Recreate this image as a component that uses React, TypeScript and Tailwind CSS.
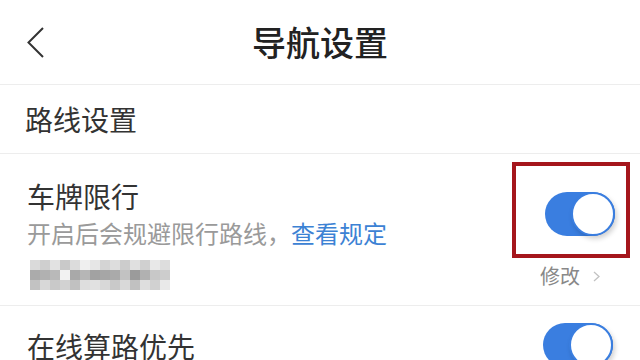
import React from "react";

const mosaic: string[][] = [
    ["bg-[#dadada]", "bg-[#cfcfcf]", "bg-[#e2e2e2]", "bg-[#c9c9c9]", "bg-[#dcdcdc]", "bg-[#efefef]", "bg-[#e6e6e6]", "bg-[#d4d4d4]", "bg-[#dddddd]", "bg-[#cccccc]", "bg-[#e0e0e0]", "bg-[#d0d0d0]", "bg-[#e8e8e8]", "bg-[#dddddd]"],
    ["bg-[#ababab]", "bg-[#b1b1b1]", "bg-[#b9b9b9]", "bg-[#f2f2f2]", "bg-[#a9a9a9]", "bg-[#b6b6b6]", "bg-[#a2a2a2]", "bg-[#a6a6a6]", "bg-[#aaaaaa]", "bg-[#c2c2c2]", "bg-[#9b9b9b]", "bg-[#b1b1b1]", "bg-[#c8c8c8]", "bg-[#cdcdcd]"],
    ["bg-[#c2c2c2]", "bg-[#d8d8d8]", "bg-[#c9c9c9]", "bg-[#d2d2d2]", "bg-[#c1c1c1]", "bg-[#dedede]", "bg-[#e1e1e1]", "bg-[#d8d8d8]", "bg-[#c9c9c9]", "bg-[#d9d9d9]", "bg-[#c1c1c1]", "bg-[#dedede]", "bg-[#d1d1d1]", "bg-[#e9e9e9]"],
];

function Toggle() {
    return (
        <div className="flex h-[44px] w-[70px] items-center justify-end rounded-full bg-[#3a7ee0]">
            <div className="h-[44px] w-[44px] rounded-full border-2 border-[#3a7ee0] bg-white shadow-[2px_3px_5px_rgba(0,0,0,0.18)]" />
        </div>
    );
}

export default function App() {
    return (
        <main className="h-[360px] w-[640px] overflow-hidden bg-white font-['Noto_Sans_CJK_SC',sans-serif]">
            {/* header */}
            <header className="grid h-[85px] grid-cols-[1fr_auto_1fr] items-center border-b border-[#ededed]">
                <div className="pl-[27px]">
                    <svg width="17" height="31" viewBox="0 0 17 31" fill="none">
                        <polyline points="16,1 1.5,15.5 16,30" stroke="#333" strokeWidth="2" />
                    </svg>
                </div>
                <h1 className="text-[34px] font-medium leading-none text-[#222]">导航设置</h1>
                <div />
            </header>

            {/* section */}
            <div className="flex h-[69px] items-center border-b border-[#ededed] pl-[25px]">
                <span className="text-[28px] leading-none text-[#333]">路线设置</span>
            </div>

            {/* plate restriction */}
            <div className="flex h-[152px] justify-between border-b border-[#ededed]">
                <div className="flex flex-col pl-[27px] pt-[28px]">
                    <span className="text-[28px] leading-none text-[#333]">车牌限行</span>
                    <span className="mt-[11px] text-[24px] leading-none text-[#9a9a9a]">
                        开启后会规避限行路线，<span className="text-[#3c82d4]">查看规定</span>
                    </span>
                    <div className="mt-[15px] flex flex-col pl-[3px]">
                        {mosaic.map((row, i) => (
                            <div key={i} className="flex">
                                {row.map((c, j) => (
                                    <div key={j} className={`h-[10px] w-[10px] ${c}`} />
                                ))}
                            </div>
                        ))}
                    </div>
                </div>
                <div className="flex flex-col items-end pr-[10px] pt-[8px]">
                    <div className="h-[96px] w-[118px] border-[4px] border-[#a5161c] pl-[29px] pt-[26px]">
                        <Toggle />
                    </div>
                    <div className="mr-[30px] mt-[8px] flex items-center gap-[13px]">
                        <span className="text-[20px] leading-none text-[#888]">修改</span>
                        <svg width="7" height="11" viewBox="0 0 7 11" fill="none">
                            <polyline points="1,1 6,5.5 1,10" stroke="#c2c2c2" strokeWidth="1.3" />
                        </svg>
                    </div>
                </div>
            </div>

            {/* online route */}
            <div className="flex justify-between">
                <span className="pl-[27px] pt-[26px] text-[28px] leading-none text-[#333]">在线算路优先</span>
                <div className="pr-[27px] pt-[17px]">
                    <Toggle />
                </div>
            </div>
        </main>
    );
}
